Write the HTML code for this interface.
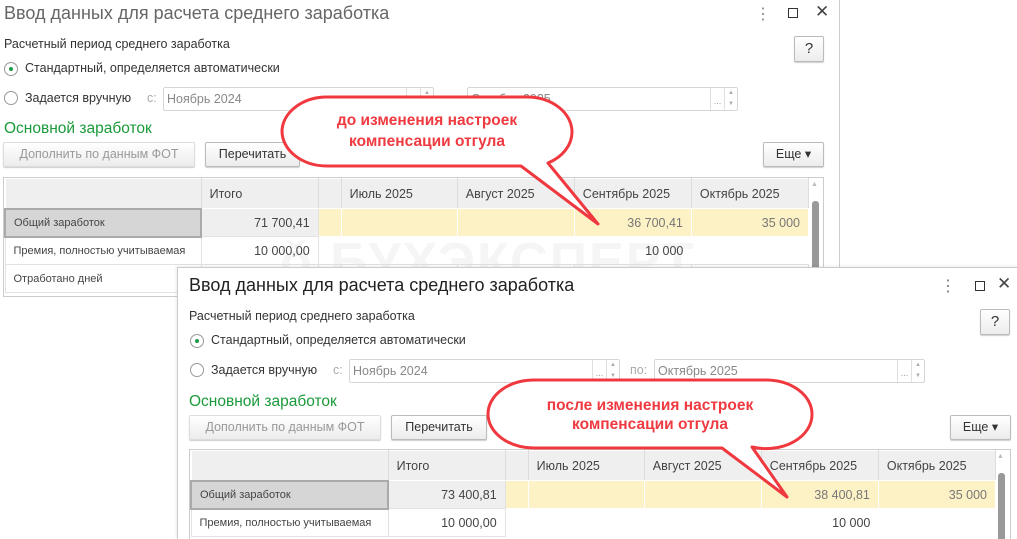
<!DOCTYPE html>
<html><head><meta charset="utf-8">
<style>
*{margin:0;padding:0;box-sizing:border-box}
body{width:1017px;height:537px;overflow:hidden;background:#fff;position:relative;font-family:"Liberation Sans",sans-serif;color:#333}
.win{position:absolute;background:#fff;overflow:hidden}
.a{position:absolute;white-space:nowrap}
.t{font-size:18px;color:#333}
.s{font-size:12.5px;color:#333}
.rad{position:absolute;width:14px;height:14px;border:1px solid #999;border-radius:50%;background:#fff}
.rad.on::after{content:"";position:absolute;left:4px;top:4px;width:4px;height:4px;border-radius:50%;background:#1a9a4a}
.inp{position:absolute;height:24px;border:1px solid #d6d6d6;border-radius:2px;font-size:12.5px;color:#888;padding:4px 3px;background:#fff}
.inp .d{position:absolute;top:0;height:22px;width:14px;border-left:1px solid #e0e0e0;font-size:9px;color:#999;text-align:center;line-height:26px}
.inp .sp{position:absolute;top:0;right:0;height:22px;width:13px;border-left:1px solid #e0e0e0;font-size:6px;color:#aaa;text-align:center;line-height:11px}
.btn{position:absolute;height:25px;border:1px solid #bbb;border-radius:2px;background:linear-gradient(#fff,#ececec);font-size:12.5px;color:#333;text-align:center;line-height:23px;box-shadow:0 1px 1px #ccc}
.btn.dis{color:#999;border-color:#ddd}
.g{font-size:15.5px;color:#1a9a3a}
table{position:absolute;border-collapse:collapse;font-size:12.5px;table-layout:fixed}
td{border:1px solid #e2e2e2;height:28px;padding:0 8px;color:#444;white-space:nowrap}
tr.h td{background:#efefef;height:30px;border-color:#fff;border-right:1px solid #ddd}
td.r{text-align:right}
td.y{background:#fdf1c6;color:#777;border-color:#fff}
td.lbl{background:#d6d6d6;border:2px solid #aaa;font-size:11px}
td.itg{background:#efefef}
.sm{font-size:11px}
</style></head><body>

<!-- top window -->
<div class="win" style="left:0;top:0;width:840px;height:300px;border-right:1px solid #ccc">
<div class="a" style="left:280px;top:232px;font-size:52px;font-weight:bold;color:#f5f5f5;letter-spacing:2px">ǒ БУХЭКСПЕРТ</div>
<div class="a t" style="left:4px;top:3px;color:#666">Ввод данных для расчета среднего заработка</div>
<div class="a" style="left:755px;top:4px;font-size:16px;color:#888">⋮</div>
<div class="a" style="left:788px;top:8px;width:10px;height:10px;border:1.5px solid #333"></div>
<div class="a" style="left:815px;top:2px;font-size:17px;color:#444">✕</div>
<div class="a s" style="left:4px;top:37px">Расчетный период среднего заработка</div>
<div class="btn" style="left:794px;top:36px;width:30px;height:26px;font-size:15px">?</div>
<div class="rad on" style="left:4px;top:62px"></div>
<div class="a s" style="left:25px;top:61px">Стандартный, определяется автоматически</div>
<div class="rad" style="left:4px;top:91px"></div>
<div class="a s" style="left:25px;top:91px">Задается вручную</div>
<div class="a s" style="left:147px;top:91px;color:#aaa">с:</div>
<div class="inp" style="left:163px;top:87px;width:271px">Ноябрь 2024<div class="d" style="right:13px">...</div><div class="sp">▲<br>▼</div></div>
<div class="inp" style="left:467px;top:87px;width:271px">Октябрь 2025<div class="d" style="right:13px">...</div><div class="sp">▲<br>▼</div></div>
<div class="a g" style="left:4px;top:120px">Основной заработок</div>
<div class="btn dis" style="left:3px;top:142px;width:192px">Дополнить по данным ФОТ</div>
<div class="btn" style="left:205px;top:142px;width:95px">Перечитать</div>
<div class="btn" style="left:763px;top:142px;width:61px">Еще ▾</div>
<div class="a" style="left:3px;top:177px;width:821px;height:120px;border:1px solid #ccc"></div>
<table style="left:4px;top:178px;width:805px">
<colgroup><col style="width:196px"><col style="width:117px"><col style="width:23px"><col style="width:116px"><col style="width:117px"><col style="width:117px"><col style="width:117px"></colgroup>
<tr class="h"><td></td><td>Итого</td><td></td><td>Июль 2025</td><td>Август 2025</td><td>Сентябрь 2025</td><td>Октябрь 2025</td></tr>
<tr><td class="lbl">Общий заработок</td><td class="r itg">71 700,41</td><td class="y"></td><td class="y"></td><td class="y"></td><td class="y r">36 700,41</td><td class="y r">35 000</td></tr>
<tr><td class="sm">Премия, полностью учитываемая</td><td class="r">10 000,00</td><td style="border:none"></td><td style="border:none"></td><td style="border:none"></td><td class="r" style="border:none">10 000</td><td style="border:none"></td></tr>
<tr><td class="sm">Отработано дней</td><td></td><td></td><td></td><td></td><td></td><td></td></tr>
</table>
<div class="a" style="left:811px;top:181px;font-size:7px;color:#bbb">▲</div>
<div class="a" style="left:812px;top:201px;width:7px;height:90px;background:#999;border-radius:3px"></div>
</div>

<!-- bottom window -->
<div class="win" style="left:177px;top:267px;width:842px;height:272px;border-left:1px solid #ccc;border-top:1px solid #ccc;box-shadow:-1px -1px 3px rgba(0,0,0,.08)">
<div class="a t" style="left:11px;top:7px;color:#222">Ввод данных для расчета среднего заработка</div>
<div class="a" style="left:762px;top:8px;font-size:16px;color:#777">⋮</div>
<div class="a" style="left:797px;top:13px;width:10px;height:10px;border:1.5px solid #333"></div>
<div class="a" style="left:819px;top:6px;font-size:17px;color:#444">✕</div>
<div class="a s" style="left:11px;top:41px">Расчетный период среднего заработка</div>
<div class="btn" style="left:802px;top:41px;width:30px;height:26px;font-size:15px">?</div>
<div class="rad on" style="left:12px;top:66px"></div>
<div class="a s" style="left:33px;top:65px">Стандартный, определяется автоматически</div>
<div class="rad" style="left:12px;top:95px"></div>
<div class="a s" style="left:33px;top:95px">Задается вручную</div>
<div class="a s" style="left:155px;top:95px;color:#aaa">с:</div>
<div class="inp" style="left:171px;top:91px;width:271px">Ноябрь 2024<div class="d" style="right:13px">...</div><div class="sp">▲<br>▼</div></div>
<div class="a s" style="left:452px;top:95px;color:#aaa">по:</div>
<div class="inp" style="left:476px;top:91px;width:271px">Октябрь 2025<div class="d" style="right:13px">...</div><div class="sp">▲<br>▼</div></div>
<div class="a g" style="left:11px;top:125px">Основной заработок</div>
<div class="btn dis" style="left:11px;top:147px;width:192px">Дополнить по данным ФОТ</div>
<div class="btn" style="left:213px;top:147px;width:96px">Перечитать</div>
<div class="btn" style="left:772px;top:147px;width:61px">Еще ▾</div>
<div class="a" style="left:11px;top:181px;width:822px;height:100px;border:1px solid #ccc"></div>
<table style="left:12px;top:182px;width:806px">
<colgroup><col style="width:197px"><col style="width:117px"><col style="width:23px"><col style="width:116px"><col style="width:117px"><col style="width:117px"><col style="width:117px"></colgroup>
<tr class="h"><td></td><td>Итого</td><td></td><td>Июль 2025</td><td>Август 2025</td><td>Сентябрь 2025</td><td>Октябрь 2025</td></tr>
<tr><td class="lbl">Общий заработок</td><td class="r itg">73 400,81</td><td class="y"></td><td class="y"></td><td class="y"></td><td class="y r">38 400,81</td><td class="y r">35 000</td></tr>
<tr><td class="sm">Премия, полностью учитываемая</td><td class="r">10 000,00</td><td style="border:none"></td><td style="border:none"></td><td style="border:none"></td><td class="r" style="border:none">10 000</td><td style="border:none"></td></tr>
</table>
<div class="a" style="left:819px;top:185px;font-size:7px;color:#bbb">▲</div>
<div class="a" style="left:820px;top:205px;width:7px;height:70px;background:#999;border-radius:3px"></div>
</div>

<!-- bubbles -->
<svg width="1017" height="537" style="position:absolute;left:0;top:0">
<g fill="#fff" stroke="#f0383f" stroke-width="3" stroke-linejoin="round">
<path d="M327,97 H527 A45,35 0 0 1 572,132 A45,35 0 0 1 548,163 L598,224 L521,166 H327 A45,35 0 0 1 282,131 A45,35 0 0 1 327,97 Z"/>
<path d="M534,380 H766 A46,34 0 0 1 812,414 A46,34 0 0 1 752,447 L787,497 L722,448 H534 A46,34 0 0 1 488,414 A46,34 0 0 1 534,380 Z"/>
</g>
<g fill="#ee3a40" font-family="Liberation Sans, sans-serif" font-weight="bold" font-size="15.5" text-anchor="middle">
<text x="427" y="125">до изменения настроек</text>
<text x="427" y="146">компенсации отгула</text>
<text x="650" y="410">после изменения настроек</text>
<text x="650" y="429">компенсации отгула</text>
</g>
</svg>
</body></html>
